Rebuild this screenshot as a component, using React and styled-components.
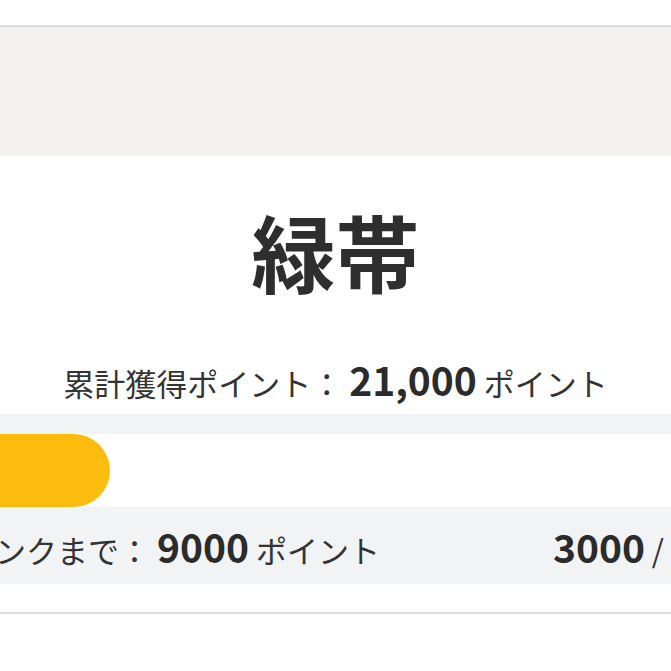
import React from 'react';
import styled, { createGlobalStyle } from 'styled-components';

const GlobalStyle = createGlobalStyle`
  html, body {
    margin: 0;
    padding: 0;
    background: #ffffff;
    overflow: hidden;
  }
  body {
    font-family: "Noto Sans CJK JP", "Noto Sans", sans-serif;
    color: #2e2e2e;
  }
`;

const StyledPage = styled.div`
  display: flex;
  flex-direction: column;
  width: 100%;
`;

const StyledTopGap = styled.div`
  height: 25px;
  border-bottom: 2px solid #dcdcdc;
`;

const StyledHero = styled.div`
  height: 129px;
  background-color: #f2f1ef;
`;

const StyledRankTitle = styled.h1`
  margin: 53px 0 0;
  font-size: 84px;
  line-height: 1;
  font-weight: 700;
  text-align: center;
  color: #2e2e2e;
`;

const StyledTotal = styled.p`
  margin: 60px 0 5px;
  font-size: 31px;
  line-height: 52px;
  text-align: center;
  white-space: nowrap;
  color: #333333;
`;

const StyledNum = styled.span`
  font-size: 39px;
  font-weight: 700;
  color: #2b2b2b;
`;

const StyledProgress = styled.div`
  padding-top: 20px;
  background-color: #f2f3f5;
`;

const StyledTrack = styled.div`
  height: 73px;
  background-color: #ffffff;
`;

const StyledFill = styled.div`
  height: 100%;
  background-color: #fbbc0d;
  border-radius: 0 37px 37px 0;
`;

const StyledInfo = styled.div`
  display: flex;
  justify-content: space-between;
  align-items: center;
  height: 77px;
  margin: 0 -86px 0 -98px;
  font-size: 31px;
  white-space: nowrap;
  color: #333333;
`;

const StyledDivider = styled.div`
  margin-top: 28px;
  border-top: 2px solid #dcdcdc;
  height: 58px;
`;

const rank = {
  name: '緑帯',
  total: '21,000',
  toNext: 9000,
  current: 3000,
  goal: 30000,
};

export default function App() {
  const fillWidth = 110;
  return (
    <StyledPage>
      <GlobalStyle />
      <StyledTopGap />
      <StyledHero />
      <StyledRankTitle>{rank.name}</StyledRankTitle>
      <StyledTotal>
        累計獲得ポイント： <StyledNum>{rank.total}</StyledNum> ポイント
      </StyledTotal>
      <StyledProgress>
        <StyledTrack>
          <StyledFill style={{ width: fillWidth }} />
        </StyledTrack>
        <StyledInfo>
          <span>
            次のランクまで： <StyledNum>{rank.toNext}</StyledNum> ポイント
          </span>
          <span>
            <StyledNum>{rank.current}</StyledNum> / {rank.goal}
          </span>
        </StyledInfo>
      </StyledProgress>
      <StyledDivider />
    </StyledPage>
  );
}
